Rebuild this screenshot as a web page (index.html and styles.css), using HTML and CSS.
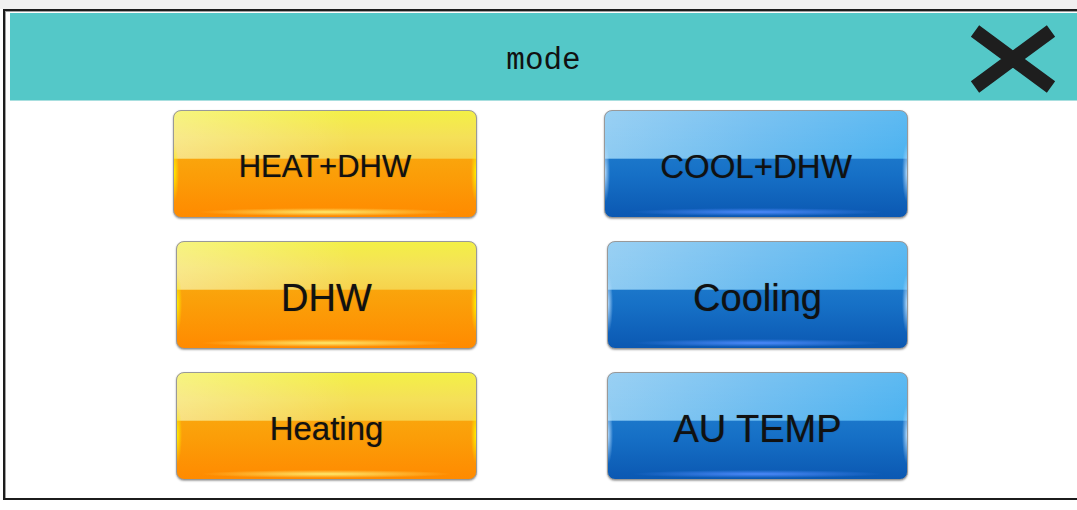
FILE: index.html
```html
<!doctype html>
<html>
<head>
<meta charset='utf-8'>
<title>mode</title>
<link rel="stylesheet" href="styles.css">
</head>
<body>
<div class='topstrip'></div>
<div class='dialog'>
  <div class='dialog-head'>
    <span class='dialog-title'>mode</span>
    <button class='close' title='close'>
      <svg width='92' height='70' viewBox='0 0 92 70'>
        <path d='M8 7 L84 63 M84 7 L8 63' stroke='#1e1e1e' stroke-width='14' fill='none'/>
      </svg>
    </button>
  </div>
  <div class='modes'>
    <button class='mode-btn warm first txt-s'>HEAT+DHW</button>
    <button class='mode-btn cool first txt-m'>COOL+DHW</button>
    <button class='mode-btn warm txt-l'>DHW</button>
    <button class='mode-btn cool txt-l'>Cooling</button>
    <button class='mode-btn warm txt-m'>Heating</button>
    <button class='mode-btn cool txt-l'>AU TEMP</button>
  </div>
</div>
</body>
</html>
```

FILE: styles.css
```css
html, body {
  margin: 0;
  overflow: hidden;
}
body {
  background: white;
  height: 510px;
}

.topstrip {
  height: 9px;
  background: #f0f0f0;
}

/* right edge of the window is cut off by the screen */
.dialog {
  box-sizing: border-box;
  margin-left: 3px;
  width: 1074px;
  height: 491px;
  border: 2px solid #1c1c1c;
  border-right: 0;
  box-shadow: inset 1px 1px 0 #a0a0a0;
  padding: 2px 0 0 5px;
  background: white;
}

.dialog-head {
  position: relative;
  height: 87px;
  border-bottom: 1px solid #a8dfdf;
  background: #54c8c8;
  display: flex;
  align-items: center;
  justify-content: center;
}
.dialog-title {
  font-family: "Liberation Mono", monospace;
  font-size: 31px;
  color: #111;
  margin-top: 8px;
}
.close {
  position: absolute;
  right: 18px;
  top: 11px;
  width: 92px;
  height: 70px;
  padding: 0;
  border: 0;
  background: none;
  cursor: pointer;
}
.close svg {
  display: block;
}

.modes {
  display: grid;
  grid-template-columns: 301px 301px;
  grid-auto-rows: 108px;
  column-gap: 130px;
  row-gap: 23px;
  padding: 9px 0 0 166px;
}

.mode-btn {
  box-sizing: border-box;
  padding: 5px 0 0 0;
  border: 1px solid #999;
  border-radius: 8px;
  box-shadow: 0 1px 2px rgba(0, 0, 0, 0.35);
  font-family: "Liberation Sans", Arial, sans-serif;
  line-height: 1;
  color: #111;
  text-shadow: 0 0 1px rgba(0, 0, 0, 0.45);
  cursor: pointer;
  background-repeat: no-repeat;
}
.first {
  margin-left: -3px;
}
.txt-s { font-size: 31px; }
.txt-m { font-size: 33px; }
.txt-l { font-size: 38px; }

.warm {
  background-image:
    radial-gradient(ellipse 42% 4px at 50% calc(100% - 5px), rgba(255, 244, 120, 0.9), rgba(255, 244, 120, 0)),
    radial-gradient(ellipse 5px 28% at 0 58%, rgba(255, 240, 0, 0.95), rgba(255, 240, 0, 0)),
    radial-gradient(ellipse 5px 28% at 100% 58%, rgba(255, 240, 0, 0.95), rgba(255, 240, 0, 0)),
    linear-gradient(to right, rgba(255, 255, 255, 0.3), rgba(255, 255, 255, 0) 60%),
    linear-gradient(#f3f046, #f5e058 55%, #f6d24c),
    linear-gradient(#f8b818, #fb9e08 60%, #ff8a00);
  background-size: 100% 100%, 100% 100%, 100% 100%, 100% 45%, 100% 45%, 100% 100%;
}

.cool {
  background-image:
    radial-gradient(ellipse 42% 4px at 50% calc(100% - 5px), rgba(80, 140, 255, 0.95), rgba(80, 140, 255, 0)),
    radial-gradient(ellipse 5px 28% at 0 58%, rgba(190, 225, 255, 0.9), rgba(190, 225, 255, 0)),
    radial-gradient(ellipse 5px 28% at 100% 58%, rgba(190, 225, 255, 0.9), rgba(190, 225, 255, 0)),
    linear-gradient(rgba(255, 255, 255, 0.1), rgba(255, 255, 255, 0)),
    linear-gradient(to right, #8ecbf2, #6cbcf0 50%, #4cb2f0),
    linear-gradient(#2a8ad6, #1670c6 60%, #0b58b2);
  background-size: 100% 100%, 100% 100%, 100% 100%, 100% 45%, 100% 45%, 100% 100%;
}
```
